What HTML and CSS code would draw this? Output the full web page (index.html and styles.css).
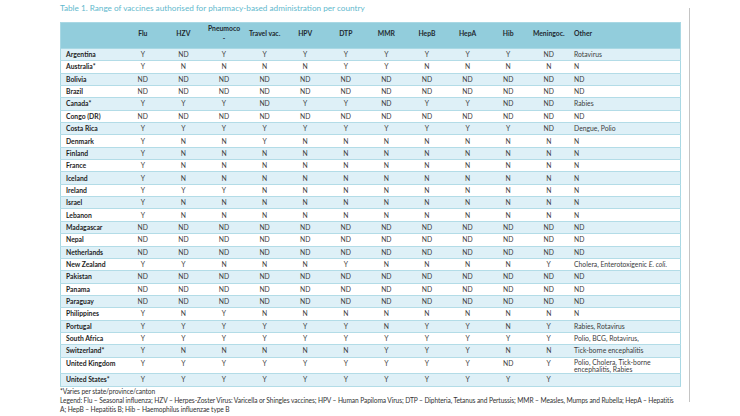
FILE: index.html
```html
<!DOCTYPE html>
<html lang="en">
<head>
<meta charset="utf-8">
<title>Table 1</title>
<link rel="stylesheet" href="styles.css">
</head>
<body>
<div class="page">
  <div class="content">
    <p class="caption">Table 1. Range of vaccines authorised for pharmacy-based administration per country</p>
    <table class="vax">
      <colgroup>
        <col class="c-country">
        <col class="c-v"><col class="c-v"><col class="c-v"><col class="c-v"><col class="c-v"><col class="c-v">
        <col class="c-v"><col class="c-v"><col class="c-v"><col class="c-v"><col class="c-v">
        <col class="c-other">
      </colgroup>
      <thead>
        <tr>
          <th></th><th>Flu</th><th>HZV</th><th>Pneumoco<br>-</th><th>Travel vac.</th><th>HPV</th><th>DTP</th><th>MMR</th><th>HepB</th><th>HepA</th><th>Hib</th><th>Meningoc.</th><th class="other">Other</th>
        </tr>
      </thead>
      <tbody>
        <tr><td>Argentina</td><td>Y</td><td>ND</td><td>Y</td><td>Y</td><td>Y</td><td>Y</td><td>Y</td><td>Y</td><td>Y</td><td>Y</td><td>ND</td><td>Rotavirus</td></tr>
        <tr><td>Australia*</td><td>Y</td><td>N</td><td>N</td><td>N</td><td>N</td><td>Y</td><td>Y</td><td>N</td><td>N</td><td>N</td><td>N</td><td>N</td></tr>
        <tr><td>Bolivia</td><td>ND</td><td>ND</td><td>ND</td><td>ND</td><td>ND</td><td>ND</td><td>ND</td><td>ND</td><td>ND</td><td>ND</td><td>ND</td><td>ND</td></tr>
        <tr><td>Brazil</td><td>ND</td><td>ND</td><td>ND</td><td>ND</td><td>ND</td><td>ND</td><td>ND</td><td>ND</td><td>ND</td><td>ND</td><td>ND</td><td>ND</td></tr>
        <tr><td>Canada*</td><td>Y</td><td>Y</td><td>Y</td><td>ND</td><td>Y</td><td>Y</td><td>ND</td><td>Y</td><td>Y</td><td>ND</td><td>ND</td><td>Rabies</td></tr>
        <tr><td>Congo (DR)</td><td>ND</td><td>ND</td><td>ND</td><td>ND</td><td>ND</td><td>ND</td><td>ND</td><td>ND</td><td>ND</td><td>ND</td><td>ND</td><td>ND</td></tr>
        <tr><td>Costa Rica</td><td>Y</td><td>Y</td><td>Y</td><td>Y</td><td>Y</td><td>Y</td><td>Y</td><td>Y</td><td>Y</td><td>Y</td><td>ND</td><td>Dengue, Polio</td></tr>
        <tr><td>Denmark</td><td>Y</td><td>N</td><td>N</td><td>Y</td><td>N</td><td>N</td><td>N</td><td>N</td><td>N</td><td>N</td><td>N</td><td>N</td></tr>
        <tr><td>Finland</td><td>Y</td><td>N</td><td>N</td><td>N</td><td>N</td><td>N</td><td>N</td><td>N</td><td>N</td><td>N</td><td>N</td><td>N</td></tr>
        <tr><td>France</td><td>Y</td><td>N</td><td>N</td><td>N</td><td>N</td><td>N</td><td>N</td><td>N</td><td>N</td><td>N</td><td>N</td><td>N</td></tr>
        <tr><td>Iceland</td><td>Y</td><td>N</td><td>N</td><td>N</td><td>N</td><td>N</td><td>N</td><td>N</td><td>N</td><td>N</td><td>N</td><td>N</td></tr>
        <tr><td>Ireland</td><td>Y</td><td>Y</td><td>Y</td><td>N</td><td>N</td><td>N</td><td>N</td><td>N</td><td>N</td><td>N</td><td>N</td><td>N</td></tr>
        <tr><td>Israel</td><td>Y</td><td>N</td><td>N</td><td>N</td><td>N</td><td>N</td><td>N</td><td>N</td><td>N</td><td>N</td><td>N</td><td>N</td></tr>
        <tr><td>Lebanon</td><td>Y</td><td>N</td><td>N</td><td>N</td><td>N</td><td>N</td><td>N</td><td>N</td><td>N</td><td>N</td><td>N</td><td>N</td></tr>
        <tr><td>Madagascar</td><td>ND</td><td>ND</td><td>ND</td><td>ND</td><td>ND</td><td>ND</td><td>ND</td><td>ND</td><td>ND</td><td>ND</td><td>ND</td><td>ND</td></tr>
        <tr><td>Nepal</td><td>ND</td><td>ND</td><td>ND</td><td>ND</td><td>ND</td><td>ND</td><td>ND</td><td>ND</td><td>ND</td><td>ND</td><td>ND</td><td>ND</td></tr>
        <tr><td>Netherlands</td><td>ND</td><td>ND</td><td>ND</td><td>ND</td><td>ND</td><td>ND</td><td>ND</td><td>ND</td><td>ND</td><td>ND</td><td>ND</td><td>ND</td></tr>
        <tr><td>New Zealand</td><td>Y</td><td>Y</td><td>N</td><td>N</td><td>N</td><td>Y</td><td>N</td><td>N</td><td>N</td><td>N</td><td>Y</td><td>Cholera, Enterotoxigenic <i>E. coli</i>.</td></tr>
        <tr><td>Pakistan</td><td>ND</td><td>ND</td><td>ND</td><td>ND</td><td>ND</td><td>ND</td><td>ND</td><td>ND</td><td>ND</td><td>ND</td><td>ND</td><td>ND</td></tr>
        <tr><td>Panama</td><td>ND</td><td>ND</td><td>ND</td><td>ND</td><td>ND</td><td>ND</td><td>ND</td><td>ND</td><td>ND</td><td>ND</td><td>ND</td><td>ND</td></tr>
        <tr><td>Paraguay</td><td>ND</td><td>ND</td><td>ND</td><td>ND</td><td>ND</td><td>ND</td><td>ND</td><td>ND</td><td>ND</td><td>ND</td><td>ND</td><td>ND</td></tr>
        <tr><td>Philippines</td><td>Y</td><td>N</td><td>Y</td><td>N</td><td>N</td><td>N</td><td>N</td><td>N</td><td>N</td><td>N</td><td>N</td><td>N</td></tr>
        <tr><td>Portugal</td><td>Y</td><td>Y</td><td>Y</td><td>Y</td><td>Y</td><td>Y</td><td>N</td><td>Y</td><td>Y</td><td>N</td><td>Y</td><td>Rabies, Rotavirus</td></tr>
        <tr><td>South Africa</td><td>Y</td><td>Y</td><td>Y</td><td>Y</td><td>Y</td><td>Y</td><td>Y</td><td>Y</td><td>Y</td><td>Y</td><td>Y</td><td>Polio, BCG, Rotavirus,</td></tr>
        <tr><td>Switzerland*</td><td>Y</td><td>N</td><td>N</td><td>N</td><td>N</td><td>N</td><td>Y</td><td>Y</td><td>Y</td><td>N</td><td>N</td><td>Tick-borne encephalitis</td></tr>
        <tr><td>United Kingdom</td><td>Y</td><td>Y</td><td>Y</td><td>Y</td><td>Y</td><td>Y</td><td>Y</td><td>Y</td><td>Y</td><td>ND</td><td>Y</td><td class="tight">Polio, Cholera, Tick-borne encephalitis, Rabies</td></tr>
        <tr><td>United States*</td><td>Y</td><td>Y</td><td>Y</td><td>Y</td><td>Y</td><td>Y</td><td>Y</td><td>Y</td><td>Y</td><td>Y</td><td>Y</td><td></td></tr>
      </tbody>
    </table>
    <p class="note">*Varies per state/province/canton</p>
    <p class="note">Legend: Flu – Seasonal influenza; HZV – Herpes-Zoster Virus: Varicella or Shingles vaccines; HPV – Human Papiloma Virus; DTP – Diphteria, Tetanus and Pertussis; MMR – Measles, Mumps and Rubella; HepA – Hepatitis A; HepB – Hepatitis B; Hib – Haemophilus influenzae type B</p>
  </div>
  <div class="rule"></div>
</div>
</body>
</html>
```

FILE: styles.css
```css
html, body {
  margin: 0;
  padding: 0;
  background: #ffffff;
}

body {
  font-family: Lato, "Open Sans", "Liberation Sans", sans-serif;
  color: #333333;
}

.page {
  display: flex;
  align-items: flex-start;
  padding: 3px 0 0 60px;
}

.content {
  width: 621px;
  flex: none;
}

.rule {
  flex: none;
  width: 1px;
  height: 394px;
  margin: 5px 0 0 8px;
  background: #c4c4c4;
}

.caption {
  margin: 0 0 9px;
  font-size: 8.2px;
  line-height: 10px;
  color: #5fb9cd;
  white-space: nowrap;
}

.vax {
  width: 621px;
  table-layout: fixed;
  border-collapse: collapse;
  font-size: 6.8px;
  border: 1px solid #a9d8e4;
}

.c-country { width: 62px; }
.c-v { width: 40.6px; }
.c-other { width: auto; }

.vax th {
  height: 25px;
  padding: 0 2px 5px;
  box-sizing: border-box;
  background: #92cddc;
  color: #1f2a30;
  font-weight: 700;
  line-height: 10px;
  text-align: center;
  vertical-align: middle;
  border-bottom: 1px solid #a9d8e4;
}

.vax th.other {
  text-align: left;
  padding-left: 5px;
}

.vax td {
  height: 12.35px;
  padding: 1.1px 2px 0;
  box-sizing: border-box;
  line-height: 8.5px;
  text-align: center;
  vertical-align: top;
  color: #3c3c3c;
  border-bottom: 1px solid #b3dce7;
}

.vax td:first-child {
  text-align: left;
  padding-left: 5px;
  font-weight: 700;
  color: #1e1e1e;
  white-space: nowrap;
}

.vax td:last-child {
  text-align: left;
  padding-left: 5px;
  padding-right: 4px;
}

.vax td.tight {
  line-height: 7.3px;
}

.vax tbody tr:nth-child(odd) td {
  background: #def0f7;
}

.vax tbody tr:nth-child(even) td {
  background: #ffffff;
}

.note {
  margin: 0;
  font-size: 6.65px;
  letter-spacing: -0.1px;
  line-height: 9px;
  color: #333333;
}
```
